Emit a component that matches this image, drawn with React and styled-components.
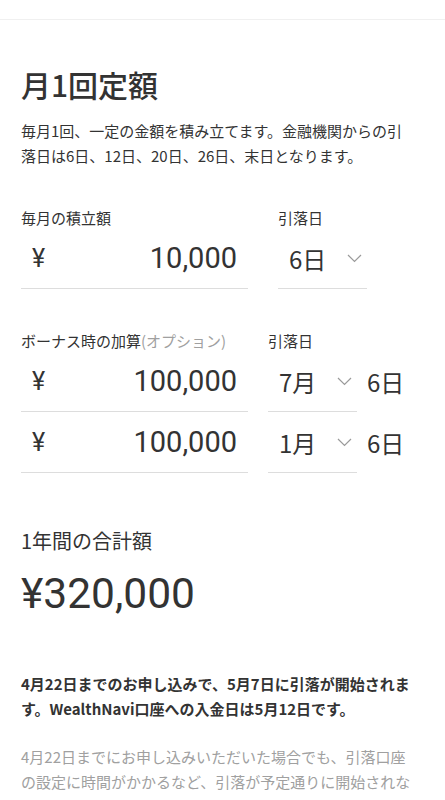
import React from "react";
import styled, { createGlobalStyle } from "styled-components";

const GlobalStyle = createGlobalStyle`
	body {
		margin: 0;
		background: #fff;
		color: #333;
		font-family: "Noto Sans CJK JP", "Noto Sans", sans-serif;
	}
`;

function Chevron() {
	return (
		<svg width="15" height="9" viewBox="0 0 15 9" fill="none">
			<path d="M1 1l6.5 6.5L14 1" stroke="#9a9a9a" strokeWidth="1.2" />
		</svg>
	);
}

function AmountField({ value }) {
	return (
		<Amount>
			<Yen>¥</Yen>
			<Value>{value}</Value>
		</Amount>
	);
}

function SelectField({ value }) {
	return (
		<Select>
			<SelectText>{value}</SelectText>
			<Chevron />
		</Select>
	);
}

function App() {
	const bonuses = [
		{ amount: "100,000", month: "7月" },
		{ amount: "100,000", month: "1月" },
	];

	return (
		<>
			<GlobalStyle />
			<TopBar />
			<Main>
				<Title>月1回定額</Title>
				<Lead>
					毎月1回、一定の金額を積み立てます。金融機関からの引落日は6日、12日、20日、26日、末日となります。
				</Lead>

				<Grid $gap={30} $top={40}>
					<Label>毎月の積立額</Label>
					<Label>引落日</Label>
					<AmountField value="10,000" />
					<SelectField value="6日" />
				</Grid>

				<Grid $gap={20} $top={42}>
					<Label>
						ボーナス時の加算<Muted>(オプション)</Muted>
					</Label>
					<Label>引落日</Label>
					{bonuses.map(({ amount, month }, i) => (
						<React.Fragment key={i}>
							<AmountField value={amount} />
							<DateGroup>
								<SelectField value={month} />
								<DayText>6日</DayText>
							</DateGroup>
						</React.Fragment>
					))}
				</Grid>

				<TotalLabel>1年間の合計額</TotalLabel>
				<Total>¥320,000</Total>

				<Notice>
					4月22日までのお申し込みで、5月7日に引落が開始されます。WealthNavi口座への入金日は5月12日です。
				</Notice>
				<Note>
					4月22日までにお申し込みいただいた場合でも、引落口座の設定に時間がかかるなど、引落が予定通りに開始されない場合があります。この場合、次回以降に積立が開始されます。
				</Note>
			</Main>
		</>
	);
}

const TopBar = styled.div`
	height: 19px;
	border-bottom: 1px solid #f0f0f0;
`;

const Main = styled.main`
	padding: 0 28px 40px 21px;
`;

const Title = styled.h1`
	margin: 44px 0 0;
	font-size: 30px;
	line-height: 40px;
	font-weight: 500;
	color: #333;
`;

const Lead = styled.p`
	margin: 14px 0 0;
	font-size: 15px;
	line-height: 25px;
`;

const Grid = styled.div`
	display: grid;
	grid-template-columns: 227px auto;
	column-gap: ${({ $gap }) => $gap}px;
	margin-top: ${({ $top }) => $top}px;
	align-items: center;
`;

const Label = styled.div`
	font-size: 15px;
	line-height: 20px;
	color: #333;
	white-space: nowrap;
`;

const Muted = styled.span`
	color: #a0a0a0;
`;

const Amount = styled.div`
	display: flex;
	align-items: center;
	justify-content: space-between;
	height: 60px;
	padding: 0 11px;
	border-bottom: 1px solid #ddd;
	font-family: Roboto, "Noto Sans", sans-serif;
	color: #333;
`;

const Yen = styled.span`
	font-size: 25px;
`;

const Value = styled.span`
	font-size: 29px;
`;

const DateGroup = styled.div`
	display: flex;
	align-items: center;
	gap: 10px;
`;

const Select = styled.div`
	display: flex;
	align-items: center;
	justify-content: space-between;
	width: 89px;
	box-sizing: border-box;
	height: 61px;
	padding: 0 5px 0 11px;
	border-bottom: 1px solid #ddd;
`;

const SelectText = styled.span`
	font-size: 24px;
	color: #333;
`;

const DayText = styled.span`
	font-size: 24px;
	color: #333;
`;

const TotalLabel = styled.div`
	margin-top: 54px;
	font-size: 20px;
	line-height: 28px;
`;

const Total = styled.div`
	margin-top: 14px;
	font-family: Roboto, "Noto Sans", sans-serif;
	font-size: 42.5px;
	line-height: 50px;
	color: #333;
`;

const Notice = styled.p`
	margin: 52px 0 0;
	font-size: 15px;
	line-height: 25px;
	font-weight: 700;
`;

const Note = styled.p`
	margin: 23px 0 0;
	font-size: 15px;
	line-height: 25px;
	color: #a0a0a0;
`;

export default App;
